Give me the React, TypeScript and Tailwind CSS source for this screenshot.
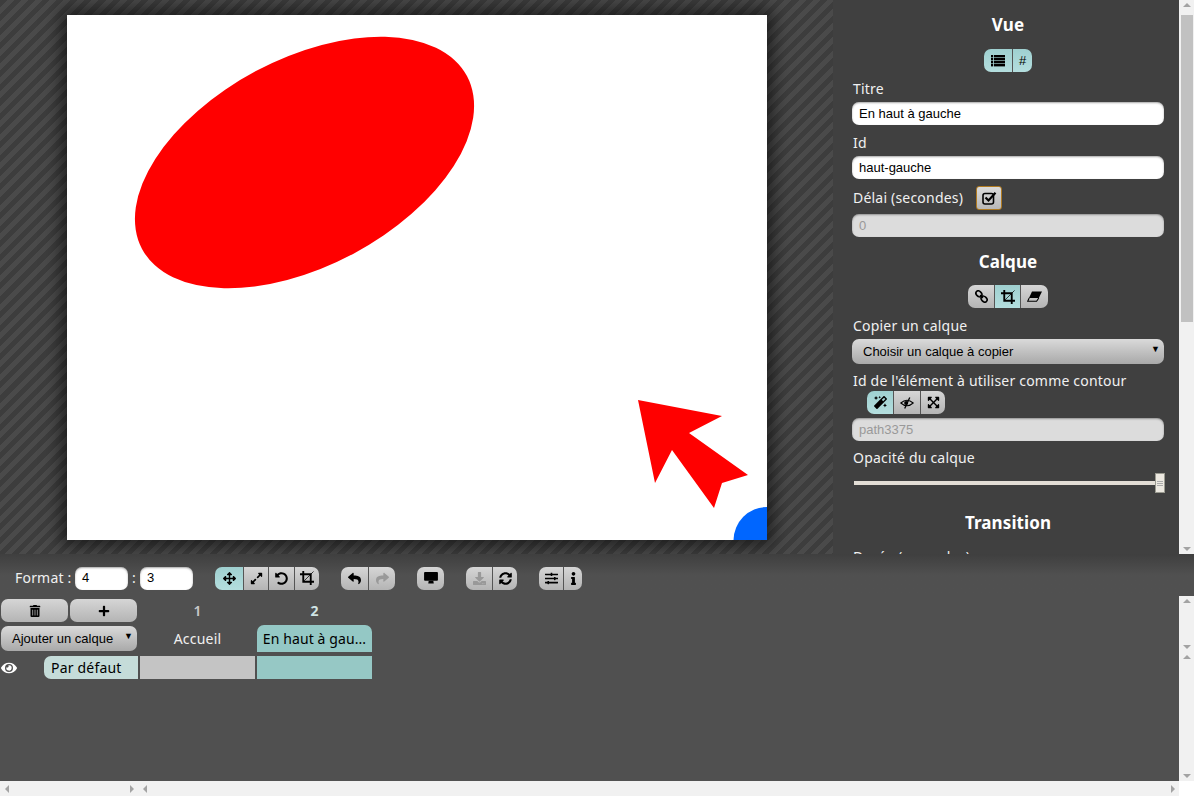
import type { ReactNode } from "react";
import {
  FaArrowsAlt,
  FaDownload,
  FaExpandAlt,
  FaExpandArrowsAlt,
  FaEye,
  FaInfo,
  FaMagic,
  FaPlus,
  FaReply,
  FaShare,
  FaSlidersH,
  FaSyncAlt,
  FaTrashAlt,
  FaUndoAlt,
} from "react-icons/fa";

type Seg = { icon: ReactNode; w: string; active?: boolean; dim?: boolean };

function ListIcon() {
  return (
    <svg width="14" height="12" viewBox="0 0 14 12" fill="currentColor">
      {[0, 3, 6, 9].map((y) => (
        <g key={y}>
          <rect x="0" y={y} width="2.2" height="2.4" />
          <rect x="3" y={y} width="11" height="2.4" />
        </g>
      ))}
    </svg>
  );
}

function CropIcon() {
  return (
    <svg width="14" height="14" viewBox="0 0 15 15" fill="none" stroke="currentColor">
      <path d="M3.5 0V11.5H15" strokeWidth="2" />
      <path d="M0 3.5H11.5V15" strokeWidth="2" />
      <path d="M3.5 11.5L14.5 0.5" strokeWidth="0.8" />
    </svg>
  );
}

function LinkIcon() {
  return (
    <svg width="13" height="13" viewBox="0 0 14 14" fill="none" stroke="currentColor" strokeWidth="1.7">
      <ellipse cx="4.2" cy="4.2" rx="3.6" ry="2.7" transform="rotate(45 4.2 4.2)" />
      <ellipse cx="9.8" cy="9.8" rx="3.6" ry="2.7" transform="rotate(45 9.8 9.8)" />
      <path d="M5.5 5.5L8.5 8.5" />
    </svg>
  );
}

function EraserIcon() {
  return (
    <svg width="15" height="11" viewBox="0 0 15 11" fill="none" stroke="currentColor">
      <polygon points="5,0.5 15,0.5 11.8,7 2,7" fill="currentColor" stroke="none" />
      <path d="M2.2 7L0.7 10.2H9.6L11.8 7" strokeWidth="1.1" />
    </svg>
  );
}

function EyeSlashIcon() {
  return (
    <svg width="14" height="12" viewBox="0 0 15 13" fill="none" stroke="currentColor">
      <path d="M0.8 6.5Q7.5 0.5 14.2 6.5Q7.5 12.5 0.8 6.5Z" strokeWidth="1.1" />
      <circle cx="6.6" cy="6.5" r="2.2" fill="currentColor" stroke="none" />
      <path d="M10.5 0.5L5 12.5" strokeWidth="1.4" />
    </svg>
  );
}

function DesktopIcon() {
  return (
    <svg width="14" height="12" viewBox="0 0 15 13" fill="currentColor">
      <rect x="0" y="0" width="15" height="9.5" rx="1" />
      <polygon points="5,9.5 10,9.5 10.5,12.5 4.5,12.5" />
    </svg>
  );
}

function CheckIcon() {
  return (
    <svg width="15" height="14" viewBox="0 0 15 14" fill="none" stroke="currentColor">
      <rect x="1" y="2.5" width="10.5" height="10.5" rx="2" strokeWidth="1.6" />
      <path d="M3.5 6.5L6.5 9.5L13.5 1.8" strokeWidth="2.2" />
    </svg>
  );
}

function SegGroup({ items }: { items: Seg[] }) {
  return (
    <div className="flex h-[23px] overflow-hidden rounded-[7px]">
      {items.map((s, i) => (
        <div
          key={i}
          className={`flex h-full items-center justify-center text-[13px] ${s.w} ${
            i > 0 ? "border-l border-[#555]" : ""
          } ${
            s.active
              ? "bg-gradient-to-b from-[#9fd0d0] to-[#b4dede]"
              : "bg-gradient-to-b from-[#d6d6d6] to-[#b4b4b4]"
          } ${s.dim ? "text-[#999]" : "text-black"}`}
        >
          {s.icon}
        </div>
      ))}
    </div>
  );
}

function Label({ children, className = "" }: { children: ReactNode; className?: string }) {
  return (
    <div className={`h-[20px] whitespace-nowrap pl-px text-[14px] leading-[20px] tracking-[0.2px] text-[#f0f0f0] ${className}`}>
      {children}
    </div>
  );
}

function Heading({ children, className = "" }: { children: ReactNode; className?: string }) {
  return (
    <div className={`h-[26px] text-center text-[17px] font-bold leading-[28px] tracking-[0.1px] text-white ${className}`}>
      {children}
    </div>
  );
}

function Field({ value, disabled }: { value: string; disabled?: boolean }) {
  return (
    <div
      className={`flex h-[23px] items-center rounded-[7px] px-[7px] font-['Liberation_Sans',sans-serif] text-[13px] shadow-[inset_0_1px_2px_rgba(0,0,0,0.35)] ${
        disabled ? "bg-[#dcdcdc] text-[#999]" : "bg-white text-black"
      }`}
    >
      {value}
    </div>
  );
}

function Triangle({ dir }: { dir: "up" | "down" | "left" | "right" }) {
  const pts = {
    up: "0,7 4,3 8,7",
    down: "0,3 8,3 4,7",
    left: "2,5 6,1 6,9",
    right: "3,1 7,5 3,9",
  }[dir];
  return (
    <svg width="8" height="10" viewBox="0 0 8 10" className="block">
      <polygon points={pts} fill="#a3a3a3" />
    </svg>
  );
}

function VScroll({ className = "", thumb }: { className?: string; thumb?: boolean }) {
  return (
    <div className={`flex w-[15px] shrink-0 flex-col items-center justify-between bg-[#f1f1f1] ${className}`}>
      <Triangle dir="up" />
      {thumb && <div className="mb-auto mt-[5px] h-[307px] w-[12px] bg-[#c1c1c1]" />}
      <Triangle dir="down" />
    </div>
  );
}

function Drawing() {
  return (
    <svg width="700" height="525" viewBox="0 0 700 525" className="block">
      <ellipse cx="237.5" cy="147.5" rx="184" ry="103.5" fill="#ff0000" transform="rotate(-28 237.5 147.5)" />
      <polygon
        points="571,385 655,401 622,418 681,460 655,468 647,493 605,435 588,468"
        fill="#ff0000"
      />
      <circle cx="700" cy="525.5" r="33.5" fill="#0066ff" />
    </svg>
  );
}

export default function App() {
  return (
    <div className="flex h-[796px] w-[1194px] flex-col overflow-hidden bg-white font-['Noto_Sans',sans-serif]">
      {/* editor area */}
      <div className="flex h-[554px] shrink-0">
        <div className="h-full w-[834px] shrink-0 overflow-hidden border-r border-[#404040] bg-[repeating-linear-gradient(135deg,#3d3d3d_0px,#3d3d3d_5px,#4a4a4a_5px,#4a4a4a_10px)] pl-[67px] pt-[15px]">
          <div className="h-[525px] w-[700px] overflow-hidden bg-white shadow-[0_0_16px_6px_rgba(0,0,0,0.55)]">
            <Drawing />
          </div>
        </div>

        <div className="h-full w-[345px] shrink-0 overflow-hidden bg-[#404040] pl-[18px] pr-[15px] pt-[11px]">
          <Heading>Vue</Heading>
          <div className="mt-[12px] flex justify-center">
            <SegGroup
              items={[
                { icon: <ListIcon />, w: "w-[28px]", active: true },
                {
                  icon: <span className="font-['Liberation_Sans',sans-serif] text-[13px]">#</span>,
                  w: "w-[20px]",
                  active: true,
                },
              ]}
            />
          </div>
          <Label className="mt-[7px]">Titre</Label>
          <div className="mt-[3px]">
            <Field value="En haut à gauche" />
          </div>
          <Label className="mt-[8px]">Id</Label>
          <div className="mt-[3px]">
            <Field value="haut-gauche" />
          </div>
          <div className="mt-[7px] flex h-[24px] items-center">
            <Label className="w-[124px] leading-[18px]">Délai (secondes)</Label>
            <div className="flex h-[24px] w-[26px] items-center justify-center rounded-[3px] border border-[#b07a20] bg-gradient-to-b from-[#dadada] to-[#b8b8b8] text-black">
              <CheckIcon />
            </div>
          </div>
          <div className="mt-[4px]">
            <Field value="0" disabled />
          </div>
          <Heading className="mt-[11px]">Calque</Heading>
          <div className="mt-[11px] flex justify-center">
            <SegGroup
              items={[
                { icon: <LinkIcon />, w: "w-[26px]" },
                { icon: <CropIcon />, w: "w-[26px]", active: true },
                { icon: <EraserIcon />, w: "w-[28px]" },
              ]}
            />
          </div>
          <Label className="mt-[8px]">Copier un calque</Label>
          <div className="relative mt-[3px] flex h-[25px] items-center rounded-[7px] bg-gradient-to-b from-[#dadada] to-[#a9a9a9] pl-[11px] font-['Liberation_Sans',sans-serif] text-[13px] text-black">
            Choisir un calque à copier
            <span className="absolute right-[4px] top-[4px] text-[9px]">▼</span>
          </div>
          <Label className="mt-[7px]">Id de l'élément à utiliser comme contour</Label>
          <div className="ml-[15px] flex">
            <SegGroup
              items={[
                { icon: <FaMagic />, w: "w-[26px]", active: true },
                { icon: <EyeSlashIcon />, w: "w-[27px]" },
                { icon: <FaExpandArrowsAlt />, w: "w-[25px]" },
              ]}
            />
          </div>
          <div className="mt-[4px]">
            <Field value="path3375" disabled />
          </div>
          <Label className="mt-[7px]">Opacité du calque</Label>
          <div className="relative mt-[13px] h-[4px] w-[306px] translate-x-[2px] bg-[#e3ded6]">
            <div className="absolute right-[-5px] top-[-8px] flex h-[20px] w-[10px] flex-col items-center justify-center gap-px border border-[#9a9a90] bg-[#ece8e0]">
              <div className="h-px w-[6px] bg-[#aaa]" />
              <div className="h-px w-[6px] bg-[#aaa]" />
              <div className="h-px w-[6px] bg-[#aaa]" />
            </div>
          </div>
          <Heading className="mt-[24px]">Transition</Heading>
          <Label className="mt-[12px]">Durée (secondes)</Label>
        </div>
        <VScroll thumb />
      </div>

      {/* bottom bar */}
      <div className="flex h-[242px] shrink-0 flex-col bg-[#505050]">
        <div className="flex h-[42px] shrink-0 items-center bg-gradient-to-b from-[#3f3f3f] to-[#505050] to-[50%] pl-[15px] pt-[6px]">
          <span className="-mt-[2px] w-[56px] whitespace-nowrap text-[14px] tracking-[0.2px] text-[#f0f0f0]">Format :</span>
          <div className="ml-[4px] w-[53px]">
            <Field value="4" />
          </div>
          <span className="-mt-[2px] w-[12px] text-center text-[14px] text-[#f0f0f0]">:</span>
          <div className="w-[53px]">
            <Field value="3" />
          </div>
          <div className="ml-[22px]">
            <SegGroup
              items={[
                { icon: <FaArrowsAlt />, w: "w-[28px]", active: true },
                { icon: <FaExpandAlt />, w: "w-[25px]" },
                { icon: <FaUndoAlt />, w: "w-[26px]" },
                { icon: <CropIcon />, w: "w-[25px]" },
              ]}
            />
          </div>
          <div className="ml-[22px]">
            <SegGroup
              items={[
                { icon: <FaReply />, w: "w-[27px]" },
                { icon: <FaShare />, w: "w-[27px]", dim: true },
              ]}
            />
          </div>
          <div className="ml-[22px]">
            <SegGroup items={[{ icon: <DesktopIcon />, w: "w-[27px]" }]} />
          </div>
          <div className="ml-[22px]">
            <SegGroup
              items={[
                { icon: <FaDownload />, w: "w-[26px]", dim: true },
                { icon: <FaSyncAlt />, w: "w-[25px]" },
              ]}
            />
          </div>
          <div className="ml-[22px]">
            <SegGroup
              items={[
                { icon: <FaSlidersH />, w: "w-[24px]" },
                { icon: <FaInfo />, w: "w-[19px]" },
              ]}
            />
          </div>
        </div>

        <div className="flex min-h-0 flex-1">
          <div className="flex min-w-0 flex-1 flex-col overflow-hidden pt-[3px]">
            <div className="flex h-[23px] items-center pl-px">
              <div className="flex h-[23px] w-[67px] items-center justify-center rounded-[7px] bg-gradient-to-b from-[#d6d6d6] to-[#b4b4b4] text-[12px] text-black">
                <FaTrashAlt />
              </div>
              <div className="ml-[2px] flex h-[23px] w-[67px] items-center justify-center rounded-[7px] bg-gradient-to-b from-[#d6d6d6] to-[#b4b4b4] text-[12px] text-black">
                <FaPlus />
              </div>
              <div className="ml-[3px] w-[115px] text-center text-[14px] font-semibold text-[#c8c8c8]">1</div>
              <div className="ml-[2px] w-[115px] text-center text-[14px] font-bold text-[#d0e4e4]">2</div>
            </div>
            <div className="mt-[3px] flex h-[27px] items-center pl-px">
              <div className="relative flex h-[25px] w-[136px] items-center rounded-[7px] bg-gradient-to-b from-[#dadada] to-[#a9a9a9] pl-[11px] font-['Liberation_Sans',sans-serif] text-[13px] text-black">
                Ajouter un calque
                <span className="absolute right-[4px] top-[4px] text-[9px]">▼</span>
              </div>
              <div className="ml-[3px] w-[115px] text-center text-[14px] tracking-[0.2px] text-[#f0f0f0]">Accueil</div>
              <div className="ml-[2px] flex h-[27px] w-[115px] items-center justify-center whitespace-nowrap rounded-t-[7px] bg-[#94c8c5] text-[14px] tracking-[0.1px] text-black">
                En haut à gau...
              </div>
            </div>
            <div className="mt-[4px] flex h-[23px] items-center pl-px">
              <div className="flex w-[16px] justify-center text-[16px] text-white">
                <FaEye />
              </div>
              <div className="ml-[27px] flex h-[23px] w-[94px] items-center rounded-l-[7px] bg-[#c5dcd9] pl-[7px] text-[14px] tracking-[0.2px] text-black">
                Par défaut
              </div>
              <div className="ml-[2px] h-[23px] w-[115px] bg-[#c4c4c4]" />
              <div className="ml-[2px] h-[23px] w-[115px] bg-[#96c8c5]" />
            </div>
          </div>
          <div className="flex shrink-0 flex-col">
            <VScroll className="h-[56px]" />
            <VScroll className="flex-1" />
          </div>
        </div>

        <div className="flex h-[15px] shrink-0 bg-[#f1f1f1]">
          <div className="flex w-[138px] shrink-0 items-center justify-between px-[3px]">
            <Triangle dir="left" />
            <Triangle dir="right" />
          </div>
          <div className="flex flex-1 items-center justify-between px-[3px]">
            <Triangle dir="left" />
            <Triangle dir="right" />
          </div>
          <div className="w-[15px] shrink-0 bg-white" />
        </div>
      </div>
    </div>
  );
}
